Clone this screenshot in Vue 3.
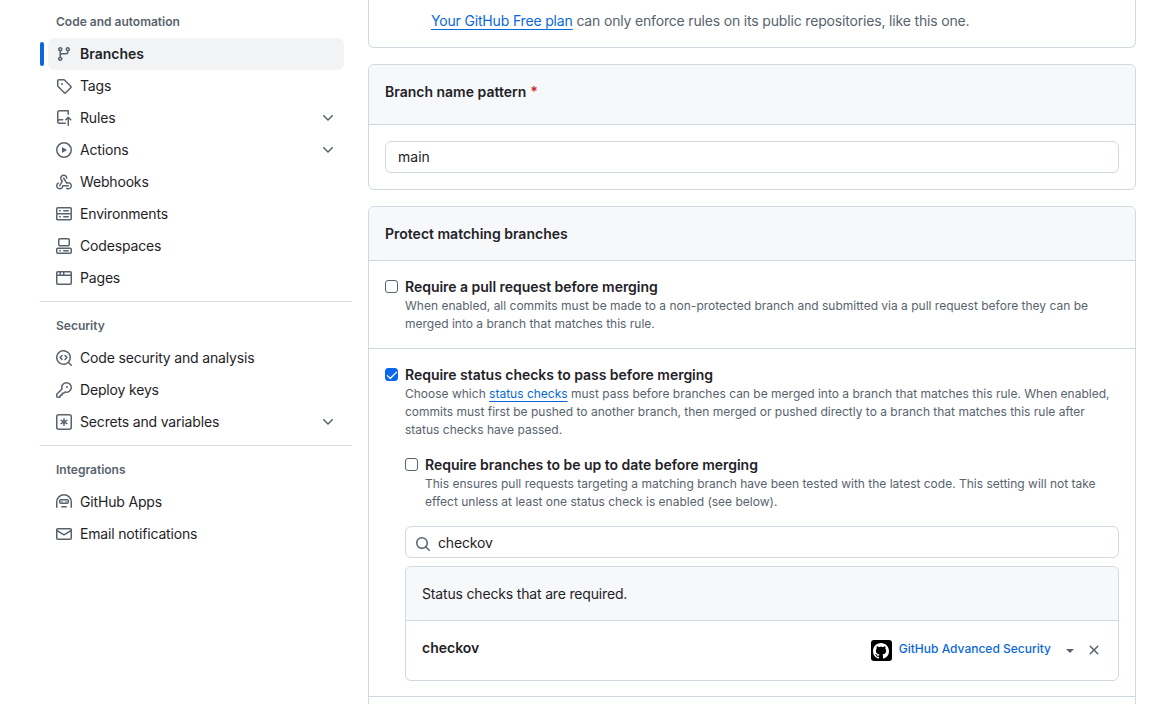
<script setup>
const groups = [
  {
    title: 'Code and automation',
    items: [
      { name: 'Branches', active: true, paths: ['M9.5 3.25a2.25 2.25 0 1 1 3 2.122V6A2.5 2.5 0 0 1 10 8.5H6a1 1 0 0 0-1 1v1.128a2.251 2.251 0 1 1-1.5 0V5.372a2.25 2.25 0 1 1 1.5 0v1.836A2.493 2.493 0 0 1 6 7h4a1 1 0 0 0 1-1v-.628A2.25 2.25 0 0 1 9.5 3.25Zm-6 0a.75.75 0 1 0 1.5 0 .75.75 0 0 0-1.5 0Zm8.25-.75a.75.75 0 1 0 0 1.5.75.75 0 0 0 0-1.5ZM4.25 12a.75.75 0 1 0 0 1.5.75.75 0 0 0 0-1.5Z'] },
      { name: 'Tags', paths: ['M1 7.775V2.75C1 1.784 1.784 1 2.75 1h5.025c.464 0 .91.184 1.238.513l6.25 6.25a1.75 1.75 0 0 1 0 2.474l-5.026 5.026a1.75 1.75 0 0 1-2.474 0l-6.25-6.25A1.752 1.752 0 0 1 1 7.775Zm1.5 0c0 .066.026.13.073.177l6.25 6.25a.25.25 0 0 0 .354 0l5.025-5.025a.25.25 0 0 0 0-.354l-6.25-6.25a.25.25 0 0 0-.177-.073H2.75a.25.25 0 0 0-.25.25ZM6 5a1 1 0 1 1 0 2 1 1 0 0 1 0-2Z'] },
      { name: 'Rules', chevron: true, paths: ['M1 2.5A2.5 2.5 0 0 1 3.5 0h8.75a.75.75 0 0 1 .75.75v3.5a.75.75 0 0 1-1.5 0V1.5h-8a1 1 0 0 0-1 1v6.708A2.493 2.493 0 0 1 3.5 9h3.25a.75.75 0 0 1 0 1.5H3.5a1 1 0 0 0 0 2h5.75a.75.75 0 0 1 0 1.5H3.5A2.5 2.5 0 0 1 1 11.5Zm13.23 7.79h-.001l-1.224-1.224v6.184a.75.75 0 0 1-1.5 0V9.066L10.28 10.29a.75.75 0 0 1-1.06-1.061l2.505-2.504a.75.75 0 0 1 1.06 0L15.29 9.23a.751.751 0 0 1-.018 1.042.751.751 0 0 1-1.042.018Z'] },
      { name: 'Actions', chevron: true, paths: ['M8 0a8 8 0 1 1 0 16A8 8 0 0 1 8 0ZM1.5 8a6.5 6.5 0 1 0 13 0 6.5 6.5 0 0 0-13 0Zm4.879-2.773 4.264 2.559a.25.25 0 0 1 0 .428l-4.264 2.559A.25.25 0 0 1 6 10.559V5.442a.25.25 0 0 1 .379-.215Z'] },
      { name: 'Webhooks', paths: ['M5.5 4.25a2.25 2.25 0 0 1 4.5 0 .75.75 0 0 0 1.5 0 3.75 3.75 0 1 0-6.14 2.889l-2.272 4.258a.75.75 0 0 0 1.324.706L7 7.25a.75.75 0 0 0-.309-1.015A2.25 2.25 0 0 1 5.5 4.25Z', 'M7.364 3.607a.75.75 0 0 1 1.03.257l2.608 4.349a3.75 3.75 0 1 1-.628 6.785.75.75 0 0 1 .752-1.299 2.25 2.25 0 1 0-.033-3.88.75.75 0 0 1-1.03-.256L7.107 4.636a.75.75 0 0 1 .257-1.03Z', 'M2.9 8.776A.75.75 0 0 1 2.625 9.8 2.25 2.25 0 1 0 6 11.75a.75.75 0 0 1 .75-.751h5.5a.75.75 0 0 1 0 1.5H7.425a3.751 3.751 0 1 1-5.55-3.998.75.75 0 0 1 1.024.274Z'] },
      { name: 'Environments', paths: ['M1.75 1h12.5c.966 0 1.75.784 1.75 1.75v4c0 .372-.116.717-.314 1 .198.283.314.628.314 1v4a1.75 1.75 0 0 1-1.75 1.75H1.75A1.75 1.75 0 0 1 0 13.25v-4c0-.372.116-.717.314-1a1.739 1.739 0 0 1-.314-1v-4C0 1.784.784 1 1.75 1ZM1.5 2.75v4c0 .138.112.25.25.25h12.5a.25.25 0 0 0 .25-.25v-4a.25.25 0 0 0-.25-.25H1.75a.25.25 0 0 0-.25.25Zm.25 5.75a.25.25 0 0 0-.25.25v4c0 .138.112.25.25.25h12.5a.25.25 0 0 0 .25-.25v-4a.25.25 0 0 0-.25-.25ZM7 4.75A.75.75 0 0 1 7.75 4h4.5a.75.75 0 0 1 0 1.5h-4.5A.75.75 0 0 1 7 4.75ZM7.75 10h4.5a.75.75 0 0 1 0 1.5h-4.5a.75.75 0 0 1 0-1.5ZM3 4.75A.75.75 0 0 1 3.75 4h.5a.75.75 0 0 1 0 1.5h-.5A.75.75 0 0 1 3 4.75ZM3.75 10h.5a.75.75 0 0 1 0 1.5h-.5a.75.75 0 0 1 0-1.5Z'] },
      { name: 'Codespaces', paths: ['M0 11.25c0-.966.784-1.75 1.75-1.75h12.5c.966 0 1.75.784 1.75 1.75v3A1.75 1.75 0 0 1 14.25 16H1.75A1.75 1.75 0 0 1 0 14.25Zm2-9.5C2 .784 2.784 0 3.75 0h8.5C13.216 0 14 .784 14 1.75v5a1.75 1.75 0 0 1-1.75 1.75h-8.5A1.75 1.75 0 0 1 2 6.75Zm1.75-.25a.25.25 0 0 0-.25.25v5c0 .138.112.25.25.25h8.5a.25.25 0 0 0 .25-.25v-5a.25.25 0 0 0-.25-.25Zm-2 9.5a.25.25 0 0 0-.25.25v3c0 .138.112.25.25.25h12.5a.25.25 0 0 0 .25-.25v-3a.25.25 0 0 0-.25-.25Z', 'M7 12.75a.75.75 0 0 1 .75-.75h4.5a.75.75 0 0 1 0 1.5h-4.5a.75.75 0 0 1-.75-.75Zm-4 0a.75.75 0 0 1 .75-.75h.5a.75.75 0 0 1 0 1.5h-.5a.75.75 0 0 1-.75-.75Z'] },
      { name: 'Pages', paths: ['M0 2.75C0 1.784.784 1 1.75 1h12.5c.966 0 1.75.784 1.75 1.75v10.5A1.75 1.75 0 0 1 14.25 15H1.75A1.75 1.75 0 0 1 0 13.25ZM14.5 6h-13v7.25c0 .138.112.25.25.25h12.5a.25.25 0 0 0 .25-.25Zm-6-3.5v2h6V2.75a.25.25 0 0 0-.25-.25ZM5 2.5v2h2v-2Zm-3.25 0a.25.25 0 0 0-.25.25V4.5h2v-2Z'] }
    ]
  },
  {
    title: 'Security',
    items: [
      { name: 'Code security and analysis', paths: ['M8.47 4.97a.75.75 0 0 0 0 1.06L9.94 7.5 8.47 8.97a.75.75 0 1 0 1.06 1.06l2-2a.75.75 0 0 0 0-1.06l-2-2a.75.75 0 0 0-1.06 0ZM6.53 6.03a.75.75 0 0 0-1.06-1.06l-2 2a.75.75 0 0 0 0 1.06l2 2a.75.75 0 1 0 1.06-1.06L5.06 7.5l1.47-1.47Z', 'M12.246 13.307a7.501 7.501 0 1 1 1.06-1.06l2.474 2.473a.749.749 0 0 1-.326 1.275.749.749 0 0 1-.734-.215ZM1.5 7.5a6.002 6.002 0 0 0 3.608 5.504 6.002 6.002 0 0 0 6.486-1.117.748.748 0 0 1 .292-.293A6 6 0 1 0 1.5 7.5Z'] },
      { name: 'Deploy keys', paths: ['M10.5 0a5.499 5.499 0 1 1-1.288 10.848l-.932.932a.749.749 0 0 1-.53.22H7v.75a.749.749 0 0 1-.22.53l-.5.5a.749.749 0 0 1-.53.22H5v.75a.749.749 0 0 1-.22.53l-.5.5a.749.749 0 0 1-.53.22h-2A1.75 1.75 0 0 1 0 14.25v-2c0-.199.079-.389.22-.53l4.932-4.932A5.5 5.5 0 0 1 10.5 0Zm-4 5.5c-.001.431.069.86.205 1.269a.75.75 0 0 1-.181.768L1.5 12.56v1.69c0 .138.112.25.25.25h1.69l.06-.06v-1.19a.75.75 0 0 1 .75-.75h1.19l.06-.06v-1.19a.75.75 0 0 1 .75-.75h1.19l1.023-1.025a.75.75 0 0 1 .768-.18A4 4 0 1 0 6.5 5.5ZM11 6a1 1 0 1 1 0-2 1 1 0 0 1 0 2Z'] },
      { name: 'Secrets and variables', chevron: true, paths: ['M0 2.75A2.75 2.75 0 0 1 2.75 0h10.5A2.75 2.75 0 0 1 16 2.75v10.5A2.75 2.75 0 0 1 13.25 16H2.75A2.75 2.75 0 0 1 0 13.25ZM2.75 1.5c-.69 0-1.25.56-1.25 1.25v10.5c0 .69.56 1.25 1.25 1.25h10.5c.69 0 1.25-.56 1.25-1.25V2.75c0-.69-.56-1.25-1.25-1.25Z', 'M8 4a.75.75 0 0 1 .75.75V6.7l1.69-.975a.75.75 0 0 1 .75 1.3L9.5 8l1.69.976a.75.75 0 0 1-.75 1.298L8.75 9.3v1.95a.75.75 0 0 1-1.5 0V9.3l-1.69.975a.75.75 0 0 1-.75-1.3L6.5 8l-1.69-.976a.75.75 0 0 1 .75-1.298L7.25 6.7V4.75A.75.75 0 0 1 8 4Z'] }
    ]
  },
  {
    title: 'Integrations',
    items: [
      { name: 'GitHub Apps', paths: ['M0 8a8 8 0 0 1 16 0v5.25a.75.75 0 0 1-1.5 0V8a6.5 6.5 0 1 0-13 0v5.25a.75.75 0 0 1-1.5 0Z', 'M3 6.75C3 5.784 3.784 5 4.75 5h6.5c.966 0 1.75.784 1.75 1.75v1.5A1.75 1.75 0 0 1 11.25 10h-6.5A1.75 1.75 0 0 1 3 8.25Zm1.75-.25a.25.25 0 0 0-.25.25v1.5c0 .138.112.25.25.25h6.5a.25.25 0 0 0 .25-.25v-1.5a.25.25 0 0 0-.25-.25Z', 'M5.75 12h4.5a.75.75 0 0 1 0 1.5h-4.5a.75.75 0 0 1 0-1.5Z', 'M6 6.9a.75.75 0 0 1 .75.75.75.75 0 0 1-1.5 0A.75.75 0 0 1 6 6.9Zm4 0a.75.75 0 0 1 .75.75.75.75 0 0 1-1.5 0A.75.75 0 0 1 10 6.9Z'] },
      { name: 'Email notifications', paths: ['M1.75 2h12.5c.966 0 1.75.784 1.75 1.75v8.5A1.75 1.75 0 0 1 14.25 14H1.75A1.75 1.75 0 0 1 0 12.25v-8.5C0 2.784.784 2 1.75 2ZM1.5 12.251c0 .138.112.25.25.25h12.5a.25.25 0 0 0 .25-.25V5.809L8.38 9.397a.75.75 0 0 1-.76 0L1.5 5.809v6.442Zm13-8.181v-.32a.25.25 0 0 0-.25-.25H1.75a.25.25 0 0 0-.25.25v.32L8 7.88Z'] }
    ]
  }
]

const chevronDown = 'M12.78 5.22a.749.749 0 0 1 0 1.06l-4.25 4.25a.749.749 0 0 1-1.06 0L3.22 6.28a.749.749 0 1 1 1.06-1.06L8 8.939l3.72-3.719a.749.749 0 0 1 1.06 0Z'
</script>

<template>
  <div class="page">
    <nav class="sidebar">
      <section v-for="(group, i) in groups" :key="group.title" class="group" :class="{ 'group-rule': i > 0 }">
        <h3 class="group-title">{{ group.title }}</h3>
        <a v-for="item in group.items" :key="item.name" class="nav-item" :class="{ active: item.active }">
          <svg class="nav-icon" width="16" height="16" viewBox="0 0 16 16">
            <path v-for="d in item.paths" :key="d" :d="d" />
          </svg>
          <span class="nav-label">{{ item.name }}</span>
          <svg v-if="item.chevron" class="nav-chevron" width="16" height="16" viewBox="0 0 16 16">
            <path :d="chevronDown" />
          </svg>
        </a>
      </section>
    </nav>

    <main class="content">
      <div class="box notice">
        <p><a class="link">Your GitHub Free plan</a> can only enforce rules on its public repositories, like this one.</p>
      </div>

      <div class="box">
        <div class="box-head pattern-head">Branch name pattern <span class="req">*</span></div>
        <div class="pattern-body">
          <div class="text-input">main</div>
        </div>
      </div>

      <div class="box">
        <div class="box-head protect-head">Protect matching branches</div>

        <div class="rule">
          <span class="check"></span>
          <div class="rule-text">
            <div class="rule-title">Require a pull request before merging</div>
            <p class="rule-desc">When enabled, all commits must be made to a non-protected branch and submitted via a pull request before they can be merged into a branch that matches this rule.</p>
          </div>
        </div>

        <div class="rule">
          <span class="check checked">
            <svg width="14" height="14" viewBox="0 0 16 16"><path d="M13.78 4.22a.75.75 0 0 1 0 1.06l-7.25 7.25a.75.75 0 0 1-1.06 0L2.22 9.28a.751.751 0 0 1 .018-1.042.751.751 0 0 1 1.042-.018L6 10.94l6.72-6.72a.75.75 0 0 1 1.06 0Z" /></svg>
          </span>
          <div class="rule-text">
            <div class="rule-title">Require status checks to pass before merging</div>
            <p class="rule-desc">Choose which <a class="link">status checks</a> must pass before branches can be merged into a branch that matches this rule. When enabled, commits must first be pushed to another branch, then merged or pushed directly to a branch that matches this rule after status checks have passed.</p>

            <div class="sub-rule">
              <span class="check"></span>
              <div class="rule-text">
                <div class="rule-title">Require branches to be up to date before merging</div>
                <p class="rule-desc">This ensures pull requests targeting a matching branch have been tested with the latest code. This setting will not take effect unless at least one status check is enabled (see below).</p>
              </div>
            </div>

            <div class="search-input">
              <svg width="16" height="16" viewBox="0 0 16 16"><path d="M10.68 11.74a6 6 0 0 1-7.922-8.982 6 6 0 0 1 8.982 7.922l3.04 3.04a.749.749 0 0 1-.326 1.275.749.749 0 0 1-.734-.215ZM11.5 7a4.499 4.499 0 1 0-8.997 0A4.499 4.499 0 0 0 11.5 7Z" /></svg>
              <span>checkov</span>
            </div>

            <div class="checks">
              <div class="checks-head">Status checks that are required.</div>
              <div class="checks-row">
                <span class="check-name">checkov</span>
                <span class="app-logo">
                  <svg width="16" height="16" viewBox="0 0 16 16"><path d="M8 0c4.42 0 8 3.58 8 8a8.013 8.013 0 0 1-5.45 7.59c-.4.08-.55-.17-.55-.38 0-.27.01-1.13.01-2.2 0-.75-.25-1.23-.54-1.48 1.78-.2 3.65-.88 3.65-3.95 0-.88-.31-1.59-.82-2.15.08-.2.36-1.02-.08-2.12 0 0-.67-.22-2.2.82-.64-.18-1.32-.27-2-.27-.68 0-1.36.09-2 .27-1.53-1.03-2.2-.82-2.2-.82-.44 1.1-.16 1.92-.08 2.12-.51.56-.82 1.28-.82 2.15 0 3.06 1.86 3.75 3.64 3.95-.23.2-.44.55-.51 1.07-.46.21-1.61.55-2.33-.66-.15-.24-.6-.83-1.23-.82-.67.01-.27.38.01.53.34.19.73.9.82 1.13.16.45.68 1.31 2.69.94 0 .67.01 1.3.01 1.49 0 .21-.15.45-.55.38A7.995 7.995 0 0 1 0 8c0-4.42 3.58-8 8-8Z" /></svg>
                </span>
                <a class="app-name">GitHub Advanced Security</a>
                <span class="caret"></span>
                <svg class="remove" width="16" height="16" viewBox="0 0 16 16"><path d="M3.72 3.72a.75.75 0 0 1 1.06 0L8 6.94l3.22-3.22a.749.749 0 0 1 1.275.326.749.749 0 0 1-.215.734L9.06 8l3.22 3.22a.749.749 0 0 1-.326 1.275.749.749 0 0 1-.734-.215L8 9.06l-3.22 3.22a.751.751 0 0 1-1.042-.018.751.751 0 0 1-.018-1.042L6.94 8 3.72 4.78a.75.75 0 0 1 0-1.06Z" /></svg>
              </div>
            </div>
          </div>
        </div>

        <div class="box-rest"></div>
      </div>
    </main>
  </div>
</template>

<style scoped>
.page {
  display: flex;
  gap: 16px;
  height: 704px;
  overflow: hidden;
  padding-left: 40px;
  box-sizing: border-box;
  background: #fff;
  color: #1f2328;
  font-family: Inter, "Liberation Sans", sans-serif;
  font-size: 14px;
  letter-spacing: -0.17px;
}
.sidebar {
  width: 312px;
  flex: none;
  padding-top: 12px;
}
.group-rule {
  border-top: 1px solid #d8dee4;
  margin-top: 7px;
  padding-top: 14px;
}
.group-title {
  margin: 0 0 6px 16px;
  font-size: 12px;
  font-weight: 600;
  line-height: 20px;
  letter-spacing: 0;
  color: #59636e;
}
.nav-item {
  position: relative;
  display: flex;
  align-items: center;
  gap: 8px;
  width: 296px;
  height: 32px;
  margin-left: 8px;
  padding: 0 8px;
  box-sizing: border-box;
  border-radius: 6px;
}
.nav-item.active {
  background: #f2f3f5;
  font-weight: 600;
  letter-spacing: 0;
}
.nav-item.active::before {
  content: "";
  position: absolute;
  left: -8px;
  top: 4px;
  width: 4px;
  height: 24px;
  border-radius: 6px;
  background: #0969da;
}
.nav-icon {
  flex: none;
  fill: #59636e;
}
.nav-label {
  flex: 1;
  padding-bottom: 2px;
}
.nav-chevron {
  flex: none;
  fill: #59636e;
}

.content {
  width: 768px;
  flex: none;
}
.box {
  border: 1px solid #d1d9e0;
  border-radius: 6px;
  margin-bottom: 16px;
}
.notice {
  height: 48px;
  box-sizing: border-box;
  border-top: 0;
  border-radius: 0 0 6px 6px;
  padding: 11px 0 0 62px;
  color: #59636e;
}
.notice p {
  margin: 0;
  line-height: 20px;
}
.link {
  color: #0969da;
  text-decoration: underline;
  text-underline-offset: 3px;
}
.box-head {
  background: #f6f8fa;
  border-bottom: 1px solid #d1d9e0;
  border-radius: 6px 6px 0 0;
  padding: 0 16px;
  font-weight: 600;
  letter-spacing: 0;
  display: flex;
  align-items: center;
  gap: 4px;
  box-sizing: border-box;
}
.pattern-head {
  height: 60px;
  padding-bottom: 7px;
}
.protect-head {
  height: 54px;
}
.req {
  color: #d1242f;
}
.pattern-body {
  padding: 16px;
}
.text-input {
  height: 32px;
  box-sizing: border-box;
  border: 1px solid #d1d9e0;
  border-radius: 6px;
  padding: 0 12px;
  line-height: 30px;
  letter-spacing: 0;
}
.rule {
  display: flex;
  gap: 7px;
  padding: 16px 16px 15px;
  border-bottom: 1px solid #d1d9e0;
}
.rule-text {
  flex: 1;
  min-width: 0;
}
.rule-title {
  font-weight: 600;
  line-height: 20px;
  letter-spacing: -0.03px;
}
.rule-desc {
  margin: 0;
  font-size: 12px;
  line-height: 18px;
  letter-spacing: 0;
  color: #59636e;
}
.check {
  flex: none;
  width: 13px;
  height: 13px;
  box-sizing: border-box;
  margin-top: 3px;
  border: 1px solid #59636e;
  border-radius: 3px;
  background: #fff;
  display: flex;
  align-items: center;
  justify-content: center;
}
.check.checked {
  background: #0b66ee;
  border-color: #0b66ee;
}
.check svg {
  flex: none;
  fill: #fff;
}
.sub-rule {
  display: flex;
  gap: 7px;
  margin-top: 16px;
}
.search-input {
  display: flex;
  align-items: center;
  gap: 7px;
  height: 32px;
  margin-top: 15px;
  padding: 0 12px 0 9px;
  box-sizing: border-box;
  border: 1px solid #d1d9e0;
  border-radius: 6px;
}
.search-input svg {
  margin-top: 3px;
  fill: #59636e;
}
.checks {
  margin-top: 8px;
  border: 1px solid #d1d9e0;
  border-radius: 6px;
}
.checks-head {
  height: 54px;
  box-sizing: border-box;
  padding: 0 16px;
  display: flex;
  align-items: center;
  background: #f6f8fa;
  border-bottom: 1px solid #d1d9e0;
  border-radius: 6px 6px 0 0;
}
.checks-row {
  display: flex;
  align-items: center;
  height: 59px;
  padding: 0 16px;
}
.check-name {
  flex: 1;
  font-weight: 600;
  letter-spacing: 0;
  margin-bottom: 6px;
}
.app-logo {
  width: 21px;
  height: 21px;
  border-radius: 3px;
  background: #000;
  display: flex;
  align-items: center;
  justify-content: center;
  margin-right: 7px;
}
.app-logo svg {
  fill: #fff;
}
.app-name {
  font-size: 12px;
  font-weight: 500;
  letter-spacing: 0;
  color: #0969da;
  margin-bottom: 4px;
}
.caret {
  width: 0;
  height: 0;
  margin-left: 15px;
  border-left: 4px solid transparent;
  border-right: 4px solid transparent;
  border-top: 4px solid #59636e;
}
.remove {
  margin-left: 12px;
  margin-bottom: 2px;
  fill: #59636e;
}
.box-rest {
  height: 40px;
}
</style>

<style>
html,
body {
  margin: 0;
  overflow: hidden;
}
</style>
